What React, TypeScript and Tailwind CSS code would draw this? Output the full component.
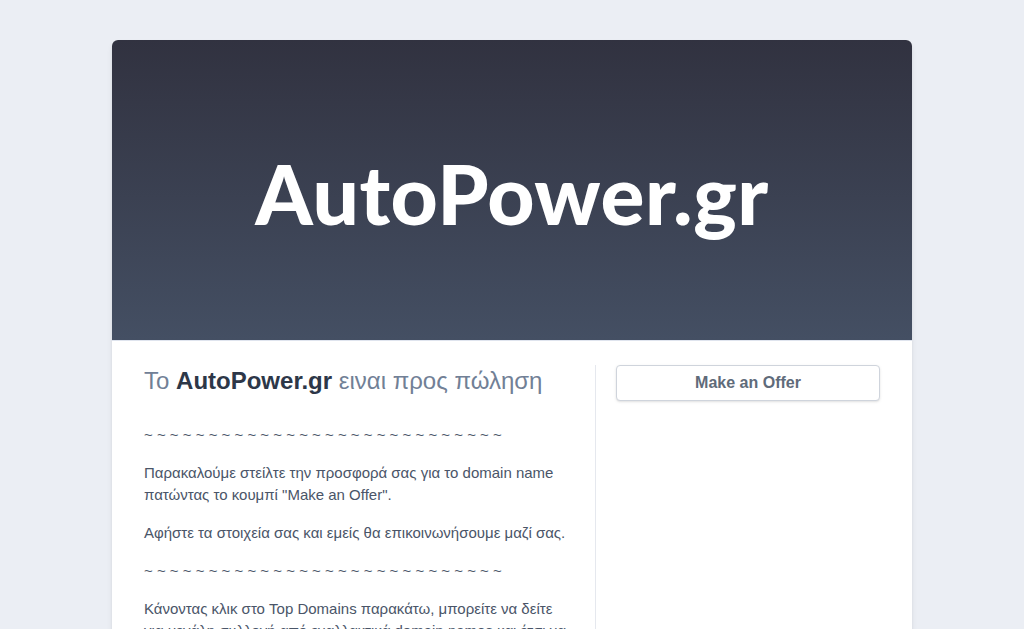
import React from 'react';

const tildes = Array(28).fill('~').join(' ');

export default function App() {
  return (
    <div className="min-h-screen bg-[#ebeef4] pt-10 font-['Liberation_Sans',Arial,sans-serif]">
      <div className="mx-auto w-[800px] overflow-hidden rounded-md bg-white shadow-md">
        {/* Hero */}
        <div className="flex h-[301px] items-center justify-center border-b border-[#dfe4ee] bg-gradient-to-b from-[#313240] to-[#444f63]">
          <h1 className="mt-[6px] font-['Lato',sans-serif] text-[82px] font-black leading-none tracking-[0.5px] text-white">
            AutoPower.gr
          </h1>
        </div>

        {/* Body */}
        <div className="flex px-8 pt-6">
          <div className="w-[451px] pr-5 text-[15px] leading-[22px] text-[#4a5568]">
            <h2 className="text-[24px] leading-8 text-[#718096]">
              Το <span className="font-bold text-[#2d3748]">AutoPower.gr</span> ειναι προς πώληση
            </h2>
            <p className="mt-[27px] mb-4">{tildes}</p>
            <p className="mb-4">
              Παρακαλούμε στείλτε την προσφορά σας για το domain name πατώντας το κουμπί "Make an Offer".
            </p>
            <p className="mb-4">Αφήστε τα στοιχεία σας και εμείς θα επικοινωνήσουμε μαζί σας.</p>
            <p className="mb-4">{tildes}</p>
            <p className="mb-4">
              Κάνοντας κλικ στο Top Domains παρακάτω, μπορείτε να δείτε για μεγάλη συλλογή από εναλλακτικά domain names και έτσι να βρείτε αυτό που σας ταιριάζει.
            </p>
          </div>
          <div className="flex-1 border-l border-[#e5e8ee] pl-5">
            <button className="h-9 w-full rounded border border-[#cfd4dc] bg-white text-[16px] font-bold text-[#5f6b7a] shadow-sm">
              Make an Offer
            </button>
          </div>
        </div>
      </div>
    </div>
  );
}
